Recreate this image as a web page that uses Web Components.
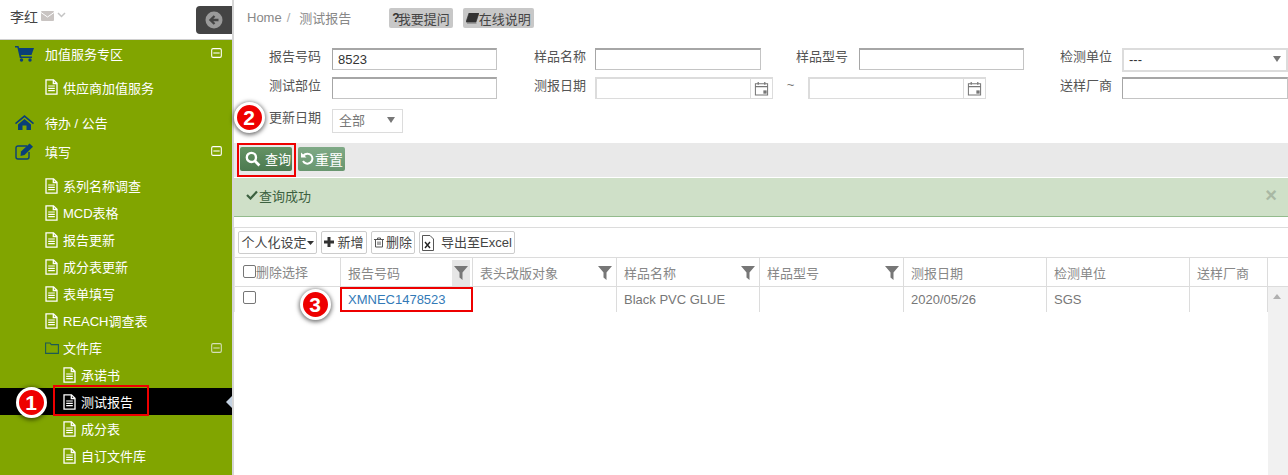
<!DOCTYPE html>
<html>
<head>
<meta charset="utf-8">
<title>测试报告</title>
<style>
    html, body{
        margin: 0;
        height: 100%;
        overflow: hidden;
        background-color: white;
        font-family: "Liberation Sans", "Noto Sans CJK SC", sans-serif;
        font-size: 13px;
        color: #555;
    }
</style>
</head>
<body>
<svg width="0" height="0" style="position:absolute">
    <defs>
        <symbol id="i-file" viewBox="0 0 13 16"><path d="M1 .8h7.500L12 4.300v10.900H1z M8.300 1v3.500H12" fill="none" stroke="currentColor" stroke-width="1.300"/><path d="M3.200 7h6.600M3.200 9.300h6.600M3.200 11.600h6.600" stroke="currentColor" stroke-width="1.200"/></symbol>
        <symbol id="i-minus" viewBox="0 0 12 11"><rect x=".7" y=".7" width="10.600" height="9.600" rx="1.500" fill="none" stroke="currentColor" stroke-width="1.200"/><path d="M2.500 5.500h7" stroke="currentColor" stroke-width="1.200"/></symbol>
        <symbol id="i-cal" viewBox="0 0 16 16"><path d="M1.500 3h13v12h-13z M1.500 6h13" fill="none" stroke="currentColor" stroke-width="1.100"/><path d="M4.500 1v3M11.500 1v3" stroke="currentColor" stroke-width="1.300"/><rect x="10" y="10" width="3.500" height="3.500" fill="currentColor"/></symbol>
        <symbol id="i-filter" viewBox="0 0 14 14"><path d="M0 0h14L8.500 6.500V14L5.500 11.500V6.500z" fill="currentColor"/></symbol>
    </defs>
</svg>

<report-page></report-page>

<script>
// shared icon helper, symbols live in the light dom so they are copied inline
function icon(name, w, h){
    var src = document.getElementById("i-" + name);
    return `<svg width="${w}" height="${h}" viewBox="${src.getAttribute("viewBox")}" style="display:block;flex:none">${src.innerHTML}</svg>`;
}

class NavItem extends HTMLElement {
    constructor(){
        super();
        this._shadowRoot = this.attachShadow({mode: 'open'});
        var level = this.getAttribute("level") || "0";
        var toggle = this.hasAttribute("toggle") ? `<span class="Toggle">${icon("minus", 11, 10)}</span>` : "";
        this._shadowRoot.innerHTML = `
            <style>
                :host{
                    display: flex;
                    align-items: center;
                    height: ${this.getAttribute("h") || 27}px;
                    color: white;
                    position: relative;
                    padding-left: ${level == "2" ? 63 : level == "1" ? 45 : 15}px;
                }
                :host([active]){
                    background-color: black;
                }
                :host([active])::after{
                    content: "";
                    position: absolute;
                    right: 0;
                    top: 8px;
                    border: 6px solid transparent;
                    border-right-color: #c4d2e2;
                    border-left-width: 0;
                }
                .Icon{
                    display: flex;
                    width: ${level == "0" ? 30 : 18}px;
                    color: ${level == "0" ? "#0a3f78" : "white"};
                }
                .Toggle{
                    position: absolute;
                    right: 10px;
                    top: 50%;
                    margin-top: -5px;
                    display: flex;
                    color: white;
                }
                :host([dim]) .Toggle{ color: #d5dfb8; }
            </style>
            <span class="Icon"><slot name="icon"></slot></span>
            <slot></slot>
            ${toggle}
        `;
        if(level != "0" && !this.querySelector("[slot=icon]")){
            this._shadowRoot.querySelector(".Icon").innerHTML = icon("file", 13, 16);
        }
    }
}

class SideNav extends HTMLElement {
    constructor(){
        super();
        this._shadowRoot = this.attachShadow({mode: 'open'});
        this._shadowRoot.innerHTML = `
            <style>
                :host{
                    display: flex;
                    flex-direction: column;
                    width: 232px;
                    height: 475px;
                    flex: none;
                    border-right: 2px solid #d6d6d6;
                    overflow: hidden;
                }
                .User{
                    height: 39px;
                    flex: none;
                    display: flex;
                    align-items: flex-start;
                    border-bottom: 1px solid #d0d0d0;
                    color: #444;
                    font-size: 14px;
                }
                .Name{
                    display: flex;
                    align-items: center;
                    gap: 3px;
                    padding: 6px 0 0 10px;
                    flex: 1;
                }
                .Back{
                    width: 36px;
                    height: 28px;
                    margin-top: 6px;
                    background-color: #444;
                    border-radius: 4px 0 0 4px;
                    display: flex;
                    align-items: center;
                    justify-content: center;
                }
                .Tree{
                    flex: 1;
                    background-color: #81a500;
                }
            </style>
            <div class="User">
                <div class="Name">李红
                    <svg width="13" height="10" viewBox="0 0 13 10"><rect width="13" height="10" rx="1" fill="#c9c4c2"/><path d="M0 1.500l6.500 4.500L13 1.500" fill="none" stroke="white" stroke-width="1"/></svg>
                    <svg width="9" height="6" viewBox="0 0 9 6" style="margin:-3px 0 0 0"><path d="M1 1l3.500 3.500L8 1" fill="none" stroke="#c4c4c4" stroke-width="1.500"/></svg>
                </div>
                <div class="Back">
                    <svg width="18" height="18" viewBox="0 0 18 18"><circle cx="9" cy="9" r="8.500" fill="#9a9a9a"/><path d="M13.500 7.700H8.300l2-2-1.600-1.500L3.800 9l4.900 4.800 1.600-1.500-2-2h5.200z" fill="#444"/></svg>
                </div>
            </div>
            <div class="Tree"><slot></slot></div>
        `;
    }
}

class BreadcrumbBar extends HTMLElement {
    constructor(){
        super();
        this._shadowRoot = this.attachShadow({mode: 'open'});
        this._shadowRoot.innerHTML = `
            <style>
                :host{
                    display: flex;
                    align-items: center;
                    height: 40px;
                    padding: 0 0 5px 13px;
                    box-sizing: border-box;
                    color: #888;
                }
                .Sep{ margin: 0 9px 0 5px; color: #aaa; }
                .Help{
                    display: flex;
                    align-items: center;
                    height: 20px;
                    padding: 0 3px;
                    background-color: #c8c8c8;
                    border-radius: 2px;
                    color: #444;
                    margin-top: 1px;
                }
                .First{ margin-left: 38px; }
                .Second{ margin-left: 10px; }
                b{ font-size: 12px; color: #333; margin-right: -2px; }
            </style>
            <span>Home</span><span class="Sep">/</span><span>测试报告</span>
            <span class="Help First"><b>?</b>我要提问</span>
            <span class="Help Second">
                <svg width="13" height="11" viewBox="0 0 13 11"><path d="M3 0h10l-3 9H0z M1 10h9.500" fill="#333" stroke="#333" stroke-width=".6"/></svg>在线说明
            </span>
        `;
    }
}

class QueryForm extends HTMLElement {
    constructor(){
        super();
        this._shadowRoot = this.attachShadow({mode: 'open'});
        this._shadowRoot.innerHTML = `
            <style>
                :host{
                    display: grid;
                    grid-template-columns: 98px 165px 98px 166px 98px 165px 98px 166px;
                    grid-template-rows: 22px 22px 24px;
                    row-gap: 7px;
                    margin-top: 8px;
                    color: #555;
                }
                label{
                    text-align: right;
                    padding-right: 11px;
                    line-height: 18px;
                }
                label.Mid{ padding-right: 9px; }
                label.Last{ padding-right: 10px; }
                .Box{
                    box-sizing: border-box;
                    height: 22px;
                    border: 1px solid #c4c4c4;
                    border-top: 2px solid #a6a6a6;
                    border-left-color: #a6a6a6;
                    padding-left: 5px;
                    line-height: 20px;
                    color: #333;
                    background-color: white;
                }
                .Range{
                    grid-column: span 3;
                    display: flex;
                    align-items: flex-start;
                    color: #777;
                }
                .Date{
                    box-sizing: border-box;
                    width: 178px;
                    height: 22px;
                    border: 2px solid #dcdcdc;
                    border-bottom: 1px solid #dcdcdc;
                    border-right-width: 1px;
                    display: flex;
                    justify-content: flex-end;
                }
                .Cal{
                    width: 21px;
                    border-left: 1px solid #dcdcdc;
                    color: #777;
                    display: flex;
                    align-items: center;
                    justify-content: center;
                }
                .Tilde{
                    width: 35px;
                    text-align: center;
                    line-height: 16px;
                }
                .Select{
                    box-sizing: border-box;
                    border: 2px solid #dcdcdc;
                    height: 24px;
                    display: flex;
                    align-items: center;
                    justify-content: space-between;
                    padding: 0 5px 2px 5px;
                    color: #333;
                    background-color: white;
                }
                .Arrow{
                    width: 0;
                    height: 0;
                    border: 4px solid transparent;
                    border-top: 6px solid #777;
                    border-bottom-width: 0;
                    margin-left: auto;
                }
                .Wide{ margin-bottom: -2px; }
                .Low{ margin-top: 3px; }
                .Small{
                    width: 71px;
                    border-width: 1px;
                    color: #777;
                    padding: 0 7px 3px 6px;
                }
            </style>
            <label>报告号码</label><div class="Box">8523</div>
            <label class="Mid">样品名称</label><div class="Box"></div>
            <label>样品型号</label><div class="Box"></div>
            <label class="Last">检测单位</label><div class="Select Wide">---<span class="Arrow"></span></div>

            <label>测试部位</label><div class="Box"></div>
            <label class="Mid">测报日期</label>
            <div class="Range">
                <div class="Date"><span class="Cal">${icon("cal", 15, 15)}</span></div>
                <span class="Tilde">~</span>
                <div class="Date"><span class="Cal">${icon("cal", 15, 15)}</span></div>
            </div>
            <label class="Last">送样厂商</label><div class="Box"></div>

            <label class="Low">更新日期</label><div class="Select Small Low">全部<span class="Arrow"></span></div>
        `;
    }
}

class ActionBar extends HTMLElement {
    constructor(){
        super();
        this._shadowRoot = this.attachShadow({mode: 'open'});
        this._shadowRoot.innerHTML = `
            <style>
                :host{
                    display: flex;
                    align-items: center;
                    gap: 6px;
                    box-sizing: border-box;
                    height: 34px;
                    margin-top: 13px;
                    padding: 0 0 2px 6px;
                    background-color: #e9e9e9;
                }
                button{
                    font: inherit;
                    height: 24px;
                    border: none;
                    border-radius: 2px;
                    color: white;
                    display: flex;
                    align-items: center;
                    padding: 0 0 1px 0;
                    cursor: pointer;
                }
                .Search{
                    width: 52px;
                    background: linear-gradient(#649264, #4c7a50);
                    padding-left: 5px;
                    gap: 4px;
                }
                .Reset{
                    width: 47px;
                    background: linear-gradient(#7fa986, #68966f);
                    padding-left: 3px;
                    gap: 1px;
                    font-size: 14px;
                }
            </style>
            <button class="Search">
                <svg width="16" height="16" viewBox="0 0 15 15"><circle cx="6" cy="6" r="4.300" fill="none" stroke="white" stroke-width="2.200"/><path d="M9.300 9.300L13.500 13.500" stroke="white" stroke-width="2.600"/></svg>查询
            </button>
            <button class="Reset">
                <svg width="13" height="13" viewBox="0 0 13 13"><path d="M2.500 3.500A5 5 0 1 1 2 9" fill="none" stroke="white" stroke-width="2"/><path d="M0 .5l5.500 5H0z" fill="white"/></svg>重置
            </button>
        `;
    }
}

class AlertBar extends HTMLElement {
    constructor(){
        super();
        this._shadowRoot = this.attachShadow({mode: 'open'});
        this._shadowRoot.innerHTML = `
            <style>
                :host{
                    display: flex;
                    align-items: center;
                    height: 39px;
                    box-sizing: border-box;
                    margin-top: 1px;
                    padding: 0 11px 4px 12px;
                    background-color: #cfe0c8;
                    border-bottom: 1px solid #93bb8d;
                    color: #3c6140;
                }
                svg{ margin-right: 1px; }
                .Close{
                    margin-left: auto;
                    color: #a9b8a4;
                    font-size: 20px;
                    font-weight: bold;
                }
            </style>
            <svg width="12" height="10" viewBox="0 0 12 10"><path d="M1 5l3.500 3.500L11 1.500" fill="none" stroke="#3c6140" stroke-width="2.200"/></svg>
            <slot></slot>
            <span class="Close">×</span>
        `;
    }
}

class ReportTable extends HTMLElement {
    constructor(){
        super();
        this._shadowRoot = this.attachShadow({mode: 'open'});
        this._shadowRoot.innerHTML = getTableTemplate();
    }
}

function getTableTemplate(){
    var cols = [
        ["报告号码", "on"], ["表头改版对象", "y"], ["样品名称", "y"], ["样品型号", "y"],
        ["测报日期", ""], ["检测单位", ""], ["送样厂商", ""]
    ];
    var head = cols.map(c => `
        <div class="Th">${c[0]}${c[1] ? `<span class="Filter ${c[1] == "on" ? "On" : ""}">${icon("filter", 14, 14)}</span>` : ""}</div>`).join("");
    return `
        <style>
            :host{
                display: block;
                margin-top: 10px;
                border-top: 1px solid #dcdcdc;
                border-left: 1px solid #e4e4e4;
                color: #777;
            }
            .Tools{
                display: flex;
                gap: 4px;
                height: 30px;
                padding: 3px 0 0 3px;
                box-sizing: border-box;
                border-bottom: 1px solid #dcdcdc;
            }
            .Btn{
                box-sizing: border-box;
                height: 23px;
                padding-bottom: 3px;
                border: 1px solid #ccc;
                border-radius: 2px;
                display: flex;
                align-items: center;
                justify-content: center;
                color: #444;
                background-color: white;
                font-size: 13px;
                gap: 3px;
            }
            .Grid{
                display: grid;
                grid-template-columns: 106px 132px 144px 143px 144px 143px 143px 78px 20px;
                grid-template-rows: 29px 25px;
            }
            .Th, .Td{
                position: relative;
                box-sizing: border-box;
                border-right: 1px solid #dcdcdc;
                padding-left: 7px;
                line-height: 29px;
                color: #888;
                white-space: nowrap;
            }
            .Th{
                border-bottom: 1px solid #dcdcdc;
                padding-top: 1px;
            }
            .Td{
                line-height: 25px;
                color: #777;
            }
            .Check{
                padding-left: 8px;
                display: flex;
                align-items: center;
            }
            .Box{
                display: block;
                flex: none;
                box-sizing: border-box;
                width: 13px;
                height: 13px;
                border: 1px solid #767676;
                border-radius: 2px;
                background-color: white;
            }
            .Td.Check{ align-items: flex-start; padding-top: 4px; }
            .Filter{
                position: absolute;
                right: 2px;
                top: 2px;
                width: 18px;
                height: 26px;
                display: flex;
                align-items: center;
                justify-content: center;
                color: #777;
            }
            .Filter.On{ background-color: #e6e6e6; }
            a{ color: #337ab7; text-decoration: none; }
            .Corner{
                border-bottom: 1px solid #dcdcdc;
            }
            .Scroll{
                background-color: #f1f1f1;
                height: 188px;
                position: relative;
            }
            .Scroll::before{
                content: "";
                position: absolute;
                left: 5px;
                top: 7px;
                border: 4.500px solid transparent;
                border-bottom: 5px solid #b0b0b0;
                border-top-width: 0;
            }
        </style>
        <div class="Tools">
            <div class="Btn" style="width:79px;gap:0">个人化设定<svg width="7" height="4" viewBox="0 0 7 4" style="margin-top:3px"><path d="M0 0h7L3.500 4z" fill="#333"/></svg></div>
            <div class="Btn" style="width:46px">
                <svg width="10" height="10" viewBox="0 0 10 10" style="margin-top:2px"><path d="M3.500 0h3v3.500H10v3H6.500V10h-3V6.500H0v-3h3.500z" fill="#333"/></svg>新增
            </div>
            <div class="Btn" style="width:44px;gap:2px">
                <svg width="10" height="11" viewBox="0 0 10 11" style="margin-top:2px"><path d="M0 2.500h10M3.500 2.500V1h3v1.500M1.500 2.500V10h7V2.500M4 4.500V8M6 4.500V8" fill="none" stroke="#555" stroke-width="1"/></svg>删除
            </div>
            <div class="Btn" style="width:96px;gap:7px">
                <svg width="12" height="16" viewBox="0 0 12 16" style="margin-top:3px"><path d="M.5 .5h7.500l3.500 3.500v11.500H.5z" fill="white" stroke="#555"/><path d="M3 7l5 6M8 7l-5 6" stroke="#222" stroke-width="1.400"/></svg>导出至Excel
            </div>
        </div>
        <div class="Grid">
            <div class="Th Check"><span class="Box" style="margin-top:-2px"></span>删除选择</div>
            ${head}
            <div class="Corner"></div>

            <div class="Td Check"><span class="Box"></span></div>
            <div class="Td"><a href="#">XMNEC1478523</a></div>
            <div class="Td"></div>
            <div class="Td">Black PVC GLUE</div>
            <div class="Td"></div>
            <div class="Td">2020/05/26</div>
            <div class="Td">SGS</div>
            <div class="Td"></div>
            <div class="Scroll"></div>
        </div>
    `;
}

// numbered callout drawn over the screenshot
class StepBadge extends HTMLElement {
    constructor(){
        super();
        this._shadowRoot = this.attachShadow({mode: 'open'});
        this._shadowRoot.innerHTML = `
            <style>
                :host{
                    position: absolute;
                    width: 25px;
                    height: 25px;
                    box-sizing: content-box;
                    border: 3px solid white;
                    border-radius: 50%;
                    background-color: #ee0000;
                    box-shadow: 0 1px 4px 1px rgba(0,0,0,.55);
                    color: white;
                    font-family: "Liberation Sans", sans-serif;
                    font-weight: bold;
                    font-size: 21px;
                    line-height: 25px;
                    text-align: center;
                    left: calc(var(--x) * 1px - 15.500px);
                    top: calc(var(--y) * 1px - 15.500px);
                }
            </style>
            <slot></slot>
        `;
    }
}

class RedFrame extends HTMLElement {
    constructor(){
        super();
        this._shadowRoot = this.attachShadow({mode: 'open'});
        this._shadowRoot.innerHTML = `
            <style>
                :host{
                    position: absolute;
                    box-sizing: border-box;
                    border: 2px solid #ee0000;
                    pointer-events: none;
                }
            </style>
        `;
    }
}

class ReportPage extends HTMLElement {
    constructor(){
        super();
        this._shadowRoot = this.attachShadow({mode: 'open'});
        this._shadowRoot.innerHTML = `
            <style>
                :host{
                    display: flex;
                    position: relative;
                    width: 1288px;
                    height: 475px;
                    overflow: hidden;
                }
                .Main{
                    flex: 1;
                    min-width: 0;
                    display: flex;
                    flex-direction: column;
                }
                .TopIcon{ display: block; }
            </style>
            <side-nav>
                <nav-item h="26" toggle>
                    <svg slot="icon" class="TopIcon" width="20" height="17" viewBox="0 0 20 17"><path d="M0 1h3.500l.7 2H19l-2.500 7H6l.4 1.500H17V13H4.800L2.400 2.500H0z" fill="#0a3f78"/><circle cx="6.500" cy="15" r="1.700" fill="#0a3f78"/><circle cx="15" cy="15" r="1.700" fill="#0a3f78"/></svg>
                    加值服务专区
                </nav-item>
                <nav-item level="1" h="42">供应商加值服务</nav-item>
                <nav-item h="28">
                    <svg slot="icon" class="TopIcon" width="19" height="15" viewBox="0 0 19 15"><path d="M9.500 0L19 8l-1 1.200-8.500-7-8.500 7L0 8z M3 9.500l6.500-5.500L16 9.500V15h-4.500v-4.500h-4V15H3z" fill="#0a3f78"/></svg>
                    待办 / 公告
                </nav-item>
                <nav-item h="30" toggle style="margin-bottom:6px">
                    <svg slot="icon" class="TopIcon" width="20" height="17" viewBox="0 0 20 17"><path d="M12 3H3a2 2 0 0 0-2 2v9a2 2 0 0 0 2 2h9a2 2 0 0 0 2-2V9" fill="none" stroke="#0a3f78" stroke-width="1.400"/><path d="M6 8.500L14.500 0.500l3.500 3.200-8.500 8.300L5.500 13z" fill="#0a3f78"/></svg>
                    填写
                </nav-item>
                <nav-item level="1">系列名称调查</nav-item>
                <nav-item level="1">MCD表格</nav-item>
                <nav-item level="1">报告更新</nav-item>
                <nav-item level="1">成分表更新</nav-item>
                <nav-item level="1">表单填写</nav-item>
                <nav-item level="1">REACH调查表</nav-item>
                <nav-item level="1" toggle dim>
                    <svg slot="icon" width="14" height="12" viewBox="0 0 14 12"><path d="M.6 1h4.400l1.300 1.600h7.100v8.800H.6z" fill="none" stroke="#1d5a55" stroke-width="1.100"/></svg>
                    文件库
                </nav-item>
                <nav-item level="2">承诺书</nav-item>
                <nav-item level="2" active>测试报告</nav-item>
                <nav-item level="2">成分表</nav-item>
                <nav-item level="2">自订文件库</nav-item>
            </side-nav>
            <div class="Main">
                <breadcrumb-bar></breadcrumb-bar>
                <query-form></query-form>
                <action-bar></action-bar>
                <alert-bar>查询成功</alert-bar>
                <report-table></report-table>
            </div>
            <red-frame style="left:53px;top:385px;width:96px;height:31px"></red-frame>
            <red-frame style="left:237px;top:143px;width:59px;height:34px"></red-frame>
            <red-frame style="left:340px;top:287px;width:133px;height:25px"></red-frame>
            <step-badge style="--x:31;--y:402">1</step-badge>
            <step-badge style="--x:249;--y:117">2</step-badge>
            <step-badge style="--x:315;--y:304">3</step-badge>
        `;
    }
}

window.customElements.define("nav-item", NavItem);
window.customElements.define("side-nav", SideNav);
window.customElements.define("breadcrumb-bar", BreadcrumbBar);
window.customElements.define("query-form", QueryForm);
window.customElements.define("action-bar", ActionBar);
window.customElements.define("alert-bar", AlertBar);
window.customElements.define("report-table", ReportTable);
window.customElements.define("step-badge", StepBadge);
window.customElements.define("red-frame", RedFrame);
window.customElements.define("report-page", ReportPage);
</script>
</body>
</html>
